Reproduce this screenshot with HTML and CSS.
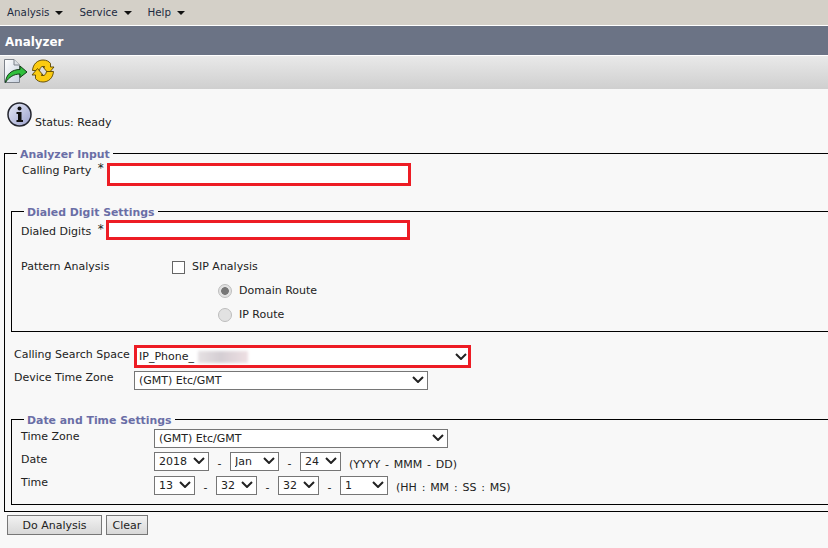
FILE: index.html
```html
<!DOCTYPE html>
<html lang="en">
<head>
<meta charset="utf-8">
<title>Analyzer</title>
<link rel="stylesheet" href="styles.css">
</head>
<body>
<nav class="menubar">
  <span class="menu">Analysis <i class="caret"></i></span>
  <span class="menu">Service <i class="caret"></i></span>
  <span class="menu">Help <i class="caret"></i></span>
</nav>
<h1 class="titlebar">Analyzer</h1>
<div class="toolbar">
  <svg class="tool-doc" width="25" height="25" viewBox="0 0 25 25">
    <defs><linearGradient id="pageFill" x1="0" y1="0" x2="1" y2="1"><stop offset="0" stop-color="#ffffff"/><stop offset="1" stop-color="#c8d2e0"/></linearGradient></defs>
    <path d="M1.500 0.500H11L16.500 6V23.500H1.500Z" fill="url(#pageFill)" stroke="#7c828a"/>
    <path d="M11 0.500V6H16.500" fill="#dde1e6" stroke="#7c828a"/>
    <path d="M2.500 23.500C3 15.500 8.500 10.500 17 10.500V7L24 13L17 18.500V15C11 15 6 18 2.500 23.500Z" fill="#2fc03c" stroke="#143c18"/>
  </svg>
  <svg class="tool-refresh" width="24" height="24" viewBox="0 0 24 24">
    <path d="M1.500 11.500C2 5 6.500 1 12 1C15.500 1 18 2.300 19.500 4.500V8H23L17.500 14.500L12 8H14C13.300 7.600 12.800 7.400 12 7.400C10.300 7.400 9 8.800 8.500 11.500Z" fill="#fbcb10" stroke="#5a4500" stroke-width="0.900"/>
    <path transform="rotate(180 12 12)" d="M1.500 11.500C2 5 6.500 1 12 1C15.500 1 18 2.300 19.500 4.500V8H23L17.500 14.500L12 8H14C13.300 7.600 12.800 7.400 12 7.400C10.300 7.400 9 8.800 8.500 11.500Z" fill="#fbcb10" stroke="#5a4500" stroke-width="0.900"/>
  </svg>
</div>
<div class="status">
  <svg width="25" height="25" viewBox="0 0 25 25">
    <defs><linearGradient id="infoFill" x1="0" y1="0" x2="1" y2="1"><stop offset="0" stop-color="#e8ecf8"/><stop offset="1" stop-color="#9aa0cc"/></linearGradient></defs>
    <circle cx="12.500" cy="12.500" r="11.500" fill="url(#infoFill)" stroke="#23252e" stroke-width="1.500"/>
    <circle cx="12.500" cy="6.500" r="2" fill="#111"/>
    <path d="M9.500 10H14.500V18H16V20H9.500V18H11V12H9.500Z" fill="#111"/>
  </svg>
  <span class="status-text">Status: Ready</span>
</div>
<form class="form">
  <fieldset class="outer">
    <legend>Analyzer Input</legend>
    <div class="row row-calling">
      <label class="label-calling">Calling Party <span class="star">*</span></label>
      <input class="req req-calling" type="text">
    </div>
    <fieldset class="inner dialed">
      <legend>Dialed Digit Settings</legend>
      <div class="row row-dialed">
        <label class="label-dialed">Dialed Digits <span class="star">*</span></label>
        <input class="req req-dialed" type="text">
      </div>
      <div class="row row-pattern">
        <span class="label-pattern">Pattern Analysis</span>
        <label class="option"><input class="check" type="checkbox">SIP Analysis</label>
      </div>
      <label class="option radio-row first-radio"><input class="radio" type="radio" name="route" checked disabled>Domain Route</label>
      <label class="option radio-row"><input class="radio" type="radio" name="route" disabled>IP Route</label>
    </fieldset>
    <div class="row row-css">
      <label class="label-css label-css-top">Calling Search Space</label>
      <span class="select-wrap">
        <select class="sel sel-css"><option>IP_Phone_</option></select>
        <span class="blur"></span>
      </span>
    </div>
    <div class="row row-device">
      <label class="label-css">Device Time Zone</label>
      <select class="sel sel-zone"><option>(GMT) Etc/GMT</option></select>
    </div>
    <fieldset class="inner datetime">
      <legend>Date and Time Settings</legend>
      <div class="row row-tz">
        <label class="label-dt label-dt-low">Time Zone</label>
        <select class="sel sel-zone"><option>(GMT) Etc/GMT</option></select>
      </div>
      <div class="row row-date">
        <label class="label-dt label-dt-low">Date</label>
        <select class="sel w55"><option>2018</option></select><span class="dash">-</span>
        <select class="sel w49"><option>Jan</option></select><span class="dash">-</span>
        <select class="sel w41"><option>24</option></select>
        <span class="hint hint-date">(YYYY - MMM - DD)</span>
      </div>
      <div class="row row-time">
        <label class="label-dt">Time</label>
        <select class="sel w41"><option>13</option></select><span class="dash">-</span>
        <select class="sel w41"><option>32</option></select><span class="dash">-</span>
        <select class="sel w41"><option>32</option></select><span class="dash">-</span>
        <select class="sel w48"><option>1</option></select>
        <span class="hint hint-time">(HH : MM : SS : MS)</span>
      </div>
    </fieldset>
  </fieldset>
  <div class="buttons">
    <button class="btn btn-do" type="button">Do Analysis</button>
    <button class="btn btn-clear" type="button">Clear</button>
  </div>
</form>
</body>
</html>
```
FILE: styles.css
```css
* { box-sizing: border-box; }
html, body { height: 100%; }
body {
  margin: 0;
  overflow: hidden;
  background: #f8f8f8;
  color: #222;
  font: 11px/14px "DejaVu Sans", sans-serif;
}
.menubar {
  display: flex;
  height: 25px;
  padding: 5px 0 0 7px;
  gap: 16px;
  background: #d4d0c8;
  color: #1c2a40;
  font-size: 10.300px;
}
.menu { display: flex; align-items: center; height: 14px; gap: 6px; }
.caret {
  width: 0;
  height: 0;
  border: 4px solid transparent;
  border-top-color: #111;
  border-bottom-width: 0;
  margin-top: 1px;
}
.titlebar {
  height: 31px;
  margin: 0;
  padding: 9px 0 0 5px;
  background: #6b7385;
  border-top: 1px solid #fff;
  border-bottom: 1px solid #fff;
  color: #fff;
  font-size: 11.900px;
  font-weight: bold;
  line-height: 14px;
}
.toolbar {
  display: flex;
  align-items: flex-start;
  height: 33px;
  padding: 3px 0 0 3px;
  background: linear-gradient(#e9e9e9, #cfcfcf);
}
.tool-doc { flex: none; }
.tool-refresh { flex: none; margin-left: 3px; }
.status {
  display: flex;
  align-items: flex-end;
  height: 38px;
  padding: 12px 0 0 7px;
  gap: 3px;
}
.status-text { position: relative; top: 3px; }
.form { margin: 0; }
.outer, .inner {
  min-width: 0;
  margin: 0;
  padding: 0;
  border: 1px solid #000;
  border-right: 0;
}
.outer { margin: 18px 0 0 4px; height: 367px; }
.inner { margin-left: 6px; }
legend {
  margin-left: 12px;
  padding: 3px 3px 0;
  color: #6a6ea6;
  font-weight: bold;
  font-size: 10.900px;
  line-height: 14px;
}
.row { display: flex; align-items: flex-start; }
.row-calling { padding: 1px 0 0 17px; }
.label-calling { width: 85px; }
.label-dialed { width: 85px; margin-top: 4px; }
.star { position: relative; top: -2px; margin-left: 3px; font-size: 12px; }
.req {
  display: block;
  border: 3px solid #ed1c24;
  background: #fff;
  border-radius: 0;
  outline: 0;
  padding: 0 3px;
}
.req-calling { width: 304px; height: 23px; }
.req-dialed { width: 304px; height: 20px; }
.dialed { margin-top: 17px; height: 129px; }
.row-pattern { padding: 20px 0 0 9px; align-items: center; height: 34px; }
.row-dialed { padding: 0 0 0 9px; }
.label-pattern { width: 151px; }
.option { display: flex; align-items: center; }
.check {
  appearance: none;
  width: 13px;
  height: 13px;
  margin: 0 7px 0 0;
  flex: none;
  background: #fff;
  border: 1px solid #666;
  border-radius: 0;
}
.radio-row { padding-left: 206px; height: 24px; }
.first-radio { margin-top: 5px; }
.radio {
  appearance: none;
  width: 14px;
  height: 14px;
  margin: 0 7px 0 0;
  flex: none;
  border: 1px solid #bdbdbd;
  border-radius: 50%;
  background: #e2e2e2;
}
.radio:checked { background: radial-gradient(circle, #777 0 3.500px, #e2e2e2 4.200px); }
.row-css { padding: 13px 0 0 9px; }
.label-css { width: 120px; }
.label-css-top { margin-top: 3px; }
.select-wrap { position: relative; display: block; }
.sel {
  appearance: none;
  display: block;
  flex: none;
  height: 19px;
  margin: 0;
  padding: 1px 0 0 4px;
  border: 1px solid #767676;
  border-radius: 0;
  background: #fff url("data:image/svg+xml,%3Csvg xmlns='http://www.w3.org/2000/svg' width='12' height='7' viewBox='0 0 12 7'%3E%3Cpath d='M1 1L6 6L11 1' fill='none' stroke='%23222' stroke-width='2'/%3E%3C/svg%3E") no-repeat right 3px top 4px;
  color: #222;
  font: 11px/14px "DejaVu Sans", sans-serif;
}
.sel-css {
  width: 337px;
  height: 23px;
  padding-left: 2px;
  border: 3px solid #ed1c24;
  background-position: right 1px top 5px;
}
.sel-zone { width: 294px; }
.blur {
  position: absolute;
  left: 64px;
  top: 6px;
  width: 50px;
  height: 12px;
  background: linear-gradient(90deg, #e6e1e3, #d4ced3 45%, #eedfe3);
  filter: blur(1.500px);
}
.row-device { padding: 3px 0 0 9px; }
.datetime { margin-top: 21px; height: 94px; }
.row-tz { padding: 1px 0 0 9px; }
.label-dt { width: 133px; }
.label-dt-low { margin-top: 1px; }
.row-date { padding: 4px 0 0 9px; }
.row-time { padding: 0 0 0 9px; }
.w55 { width: 55px; }
.w49 { width: 49px; }
.w48 { width: 48px; }
.w41 { width: 41px; }
.dash { width: 21px; text-align: center; line-height: 24px; }
.hint { word-spacing: 1.300px; margin-left: 8px; }
.hint-date { margin-top: 6px; }
.hint-time { margin-top: 5px; }
.buttons { display: flex; gap: 4px; padding: 3px 0 0 7px; }
.btn {
  height: 20px;
  padding: 1px 0 0;
  border: 1px solid #777;
  border-radius: 0;
  background: linear-gradient(#f2f2f2, #d8d8d8);
  color: #222;
  font: 11px/14px "DejaVu Sans", sans-serif;
}
.btn-do { width: 95px; }
.btn-clear { width: 42px; }
```
